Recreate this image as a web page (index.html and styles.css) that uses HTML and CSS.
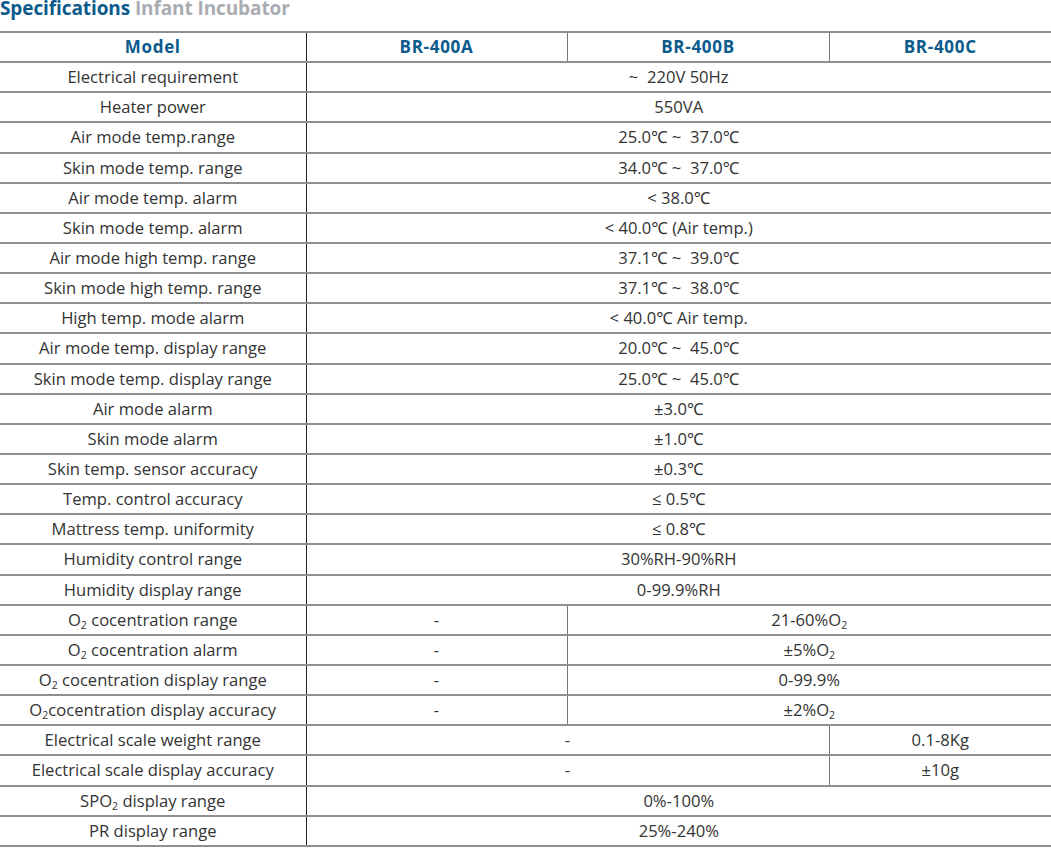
FILE: index.html
```html
<!DOCTYPE html>
<html lang="en">
<head>
<meta charset="utf-8">
<title>Specifications Infant Incubator</title>
<link rel="stylesheet" href="styles.css">
</head>
<body>
<h1 class="title"><span class="title-main">Specifications</span> <span class="title-sub">Infant Incubator</span></h1>
<table class="spec">
  <colgroup>
    <col class="c-label"><col class="c-a"><col class="c-b"><col class="c-c">
  </colgroup>
  <thead>
    <tr><th>Model</th><th>BR-400A</th><th>BR-400B</th><th>BR-400C</th></tr>
  </thead>
  <tbody>
    <tr><td>Electrical requirement</td><td colspan="3">~ &nbsp;220V 50Hz</td></tr>
    <tr><td>Heater power</td><td colspan="3">550VA</td></tr>
    <tr><td>Air mode temp.range</td><td colspan="3">25.0℃ ~ &nbsp;37.0℃</td></tr>
    <tr><td>Skin mode temp. range</td><td colspan="3">34.0℃ ~ &nbsp;37.0℃</td></tr>
    <tr><td>Air mode temp. alarm</td><td colspan="3">&lt; 38.0℃</td></tr>
    <tr><td>Skin mode temp. alarm</td><td colspan="3">&lt; 40.0℃ (Air temp.)</td></tr>
    <tr><td>Air mode high temp. range</td><td colspan="3">37.1℃ ~ &nbsp;39.0℃</td></tr>
    <tr><td>Skin mode high temp. range</td><td colspan="3">37.1℃ ~ &nbsp;38.0℃</td></tr>
    <tr><td>High temp. mode alarm</td><td colspan="3">&lt; 40.0℃ Air temp.</td></tr>
    <tr><td>Air mode temp. display range</td><td colspan="3">20.0℃ ~ &nbsp;45.0℃</td></tr>
    <tr><td>Skin mode temp. display range</td><td colspan="3">25.0℃ ~ &nbsp;45.0℃</td></tr>
    <tr><td>Air mode alarm</td><td colspan="3">±3.0℃</td></tr>
    <tr><td>Skin mode alarm</td><td colspan="3">±1.0℃</td></tr>
    <tr><td>Skin temp. sensor accuracy</td><td colspan="3">±0.3℃</td></tr>
    <tr><td>Temp. control accuracy</td><td colspan="3">≤ 0.5℃</td></tr>
    <tr><td>Mattress temp. uniformity</td><td colspan="3">≤ 0.8℃</td></tr>
    <tr><td>Humidity control range</td><td colspan="3">30%RH-90%RH</td></tr>
    <tr><td>Humidity display range</td><td colspan="3">0-99.9%RH</td></tr>
    <tr><td>O<sub>2</sub> cocentration range</td><td>-</td><td colspan="2">21-60%O<sub>2</sub></td></tr>
    <tr><td>O<sub>2</sub> cocentration alarm</td><td>-</td><td colspan="2">±5%O<sub>2</sub></td></tr>
    <tr><td>O<sub>2</sub> cocentration display range</td><td>-</td><td colspan="2">0-99.9%</td></tr>
    <tr><td>O<sub>2</sub>cocentration display accuracy</td><td>-</td><td colspan="2">±2%O<sub>2</sub></td></tr>
    <tr><td>Electrical scale weight range</td><td colspan="2">-</td><td>0.1-8Kg</td></tr>
    <tr><td>Electrical scale display accuracy</td><td colspan="2">-</td><td>±10g</td></tr>
    <tr><td>SPO<sub>2</sub> display range</td><td colspan="3">0%-100%</td></tr>
    <tr><td>PR display range</td><td colspan="3">25%-240%</td></tr>
  </tbody>
</table>
</body>
</html>
```
FILE: styles.css
```css
html, body {
  margin: 0;
  padding: 0;
  background: #ffffff;
}
body {
  font-family: "Open Sans", "Noto Sans", sans-serif;
  color: #333333;
  width: 1051px;
}
.title {
  margin: 0;
  height: 31px;
  font-size: 19px;
  line-height: 17.5px;
  font-weight: 700;
  white-space: nowrap;
  letter-spacing: -0.1px;
}
.title-main { color: #0b5a8c; }
.title-sub { color: #a9acb1; }

.spec {
  width: 1051px;
  border-collapse: collapse;
  table-layout: fixed;
  font-size: 16.6px;
}
.c-label { width: 306px; }
.c-a { width: 261px; }
.c-b { width: 262px; }
.c-c { width: 222px; }

.spec tr { height: 30.15px; }
.spec th, .spec td {
  padding: 0;
  text-align: center;
  vertical-align: middle;
  border-top: 2px solid #8f8f8f;
  border-bottom: 2px solid #8f8f8f;
  border-left: 1px solid #777777;
  border-right: 1px solid #777777;
  white-space: nowrap;
  line-height: 20px;
}
.spec th:first-child, .spec td:first-child {
  border-left: none;
  border-right: 1px solid #222222;
}
.spec th:last-child, .spec td:last-child { border-right: none; }
.spec th {
  color: #0b5a8c;
  font-weight: 700;
  font-size: 17px;
  letter-spacing: 0.7px;
}
.spec sub {
  font-size: 10.5px;
  line-height: 0;
  vertical-align: -3px;
}
```
